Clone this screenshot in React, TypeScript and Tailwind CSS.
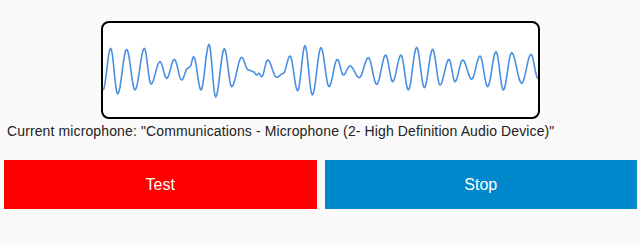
import React from "react";

const ext: [number, number][] = [
  [24, 225], [47, 100], [68, 237], [95, 103], [120, 225], [148, 100], [168, 207], [195, 140],
  [215, 190], [238, 133], [260, 195], [278, 160], [285, 155], [296, 125], [318, 225], [342, 88],
  [362, 246], [388, 101], [410, 215], [440, 127], [460, 165], [475, 170], [485, 180], [492, 175],
  [500, 185], [518, 135], [545, 187], [565, 175], [585, 123], [608, 227], [630, 92], [652, 240],
  [678, 98], [702, 215], [727, 133], [745, 180], [765, 153], [793, 188], [820, 128], [845, 208],
  [872, 120], [893, 200], [918, 120], [940, 225], [965, 97], [988, 218], [1013, 103], [1035, 210],
  [1062, 133], [1080, 200], [1103, 135], [1130, 193], [1155, 123], [1178, 215], [1203, 110],
  [1225, 225], [1250, 113], [1280, 205], [1308, 118], [1329, 190],
];

function buildPath(): string {
  const pts: string[] = [];
  for (let i = 0; i < ext.length - 1; i++) {
    const [x0, y0] = ext[i];
    const [x1, y1] = ext[i + 1];
    const steps = 8;
    for (let s = i === 0 ? 0 : 1; s <= steps; s++) {
      const t = s / steps;
      const x = x0 + (x1 - x0) * t;
      const y = y0 + (y1 - y0) * (1 - Math.cos(Math.PI * t)) / 2;
      pts.push(`${x.toFixed(1)},${y.toFixed(1)}`);
    }
  }
  return "M" + pts.join(" L");
}

export default function App() {
  const d = buildPath();
  return (
    <div className="w-[640px] h-[245px] bg-[#fafafa] overflow-hidden" style={{ fontFamily: '"Liberation Sans", Arial, sans-serif' }}>
      <div className="pt-[21px]">
        <div className="mx-auto w-[439px] h-[98px] border-2 border-black rounded-lg bg-white overflow-hidden">
          <svg className="w-full h-full block" viewBox="24 24 1305 282" preserveAspectRatio="none">
            <path d={d} fill="none" stroke="#4a8fe0" strokeWidth={1.6} vectorEffect="non-scaling-stroke" strokeLinejoin="round" />
          </svg>
        </div>
      </div>
      <div className="pl-[7px] mt-[2px] text-[14px] tracking-[0.12px] leading-[20px] text-[#222]">
        Current microphone: "Communications - Microphone (2- High Definition Audio Device)"
      </div>
      <div className="flex gap-[8px] pl-[4px] pr-[3px] mt-[19px]">
        <button className="flex-1 h-[49px] bg-[#ff0000] text-white text-[16px]">Test</button>
        <button className="flex-1 h-[49px] bg-[#0088cc] text-white text-[16px]">Stop</button>
      </div>
    </div>
  );
}
